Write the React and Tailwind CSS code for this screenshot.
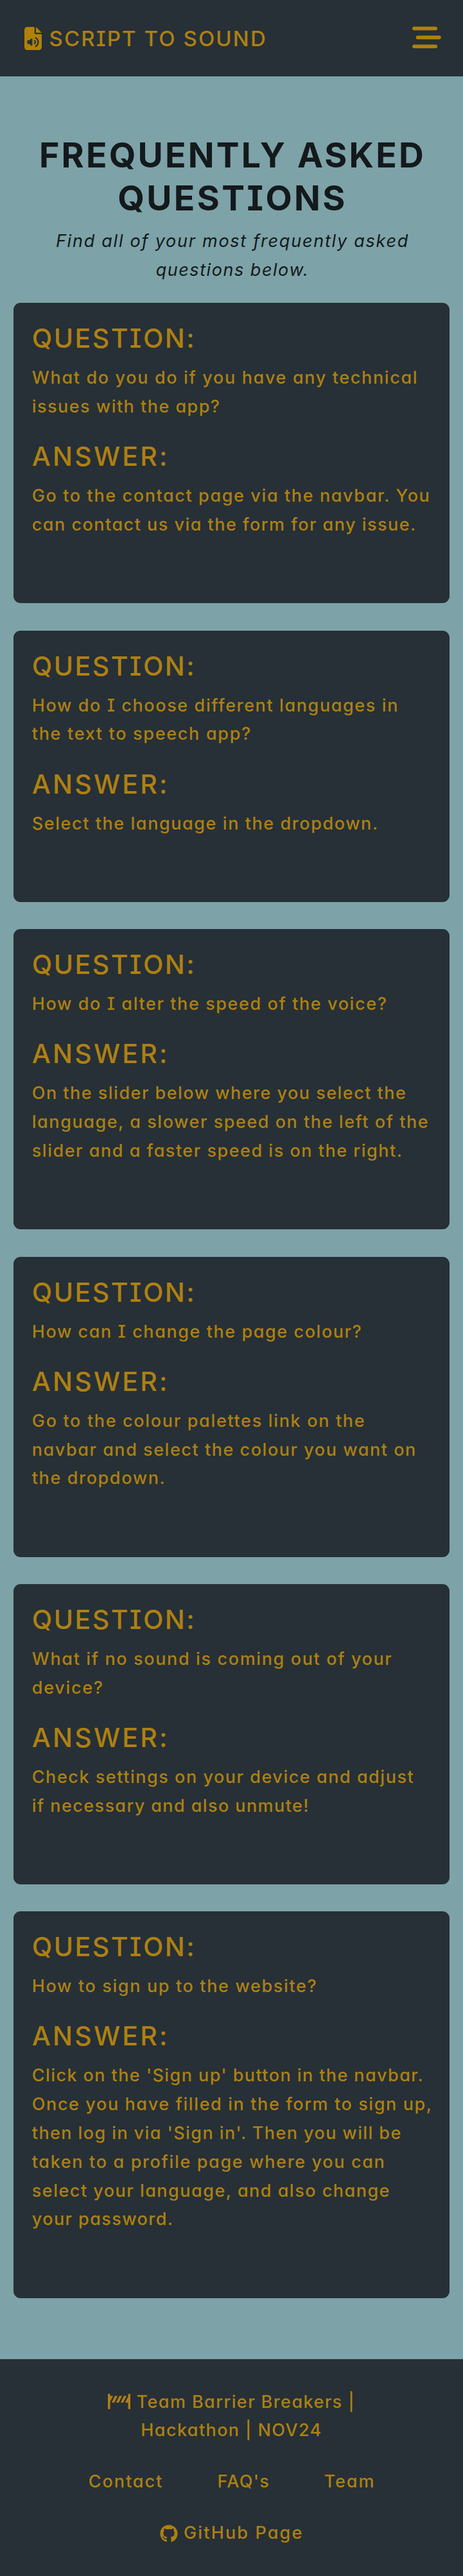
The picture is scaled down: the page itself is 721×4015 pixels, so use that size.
import { FaBarsStaggered, FaFileAudio, FaGithub, FaRoadBarrier } from "react-icons/fa6";

const FAQS = [
  {
    question: [
      ["What do you do if you have any technical", "tracking-[1.65px]"],
      ["issues with the app?", "tracking-[1.47px]"],
    ],
    answer: [
      ["Go to the contact page via the navbar. You", "tracking-[1.61px]"],
      ["can contact us via the form for any issue.", "tracking-[1.48px]"],
    ],
  },
  {
    question: [
      ["How do I choose different languages in", "tracking-[1.6px]"],
      ["the text to speech app?", "tracking-[1.69px]"],
    ],
    answer: [["Select the language in the dropdown.", "tracking-[1.57px]"]],
  },
  {
    question: [["How do I alter the speed of the voice?", "tracking-[1.6px]"]],
    answer: [
      ["On the slider below where you select the", "tracking-[1.48px]"],
      ["language, a slower speed on the left of the", "tracking-[1.54px]"],
      ["slider and a faster speed is on the right.", "tracking-[1.52px]"],
    ],
  },
  {
    question: [["How can I change the page colour?", "tracking-[1.57px]"]],
    answer: [
      ["Go to the colour palettes link on the", "tracking-[1.67px]"],
      ["navbar and select the colour you want on", "tracking-[1.54px]"],
      ["the dropdown.", "tracking-[1.62px]"],
    ],
  },
  {
    question: [
      ["What if no sound is coming out of your", "tracking-[1.63px]"],
      ["device?", "tracking-[1.7px]"],
    ],
    answer: [
      ["Check settings on your device and adjust", "tracking-[1.53px]"],
      ["if necessary and also unmute!", "tracking-[1.41px]"],
    ],
  },
  {
    question: [["How to sign up to the website?", "tracking-[1.64px]"]],
    answer: [
      ["Click on the 'Sign up' button in the navbar.", "tracking-[1.41px]"],
      ["Once you have filled in the form to sign up,", "tracking-[1.6px]"],
      ["then log in via 'Sign in'. Then you will be", "tracking-[1.4px]"],
      ["taken to a profile page where you can", "tracking-[1.65px]"],
      ["select your language, and also change", "tracking-[1.49px]"],
      ["your password.", "tracking-[1.42px]"],
    ],
  },
];

function Lines({ lines }) {
  return (
    <p className="text-[27px] leading-[44.8px] whitespace-nowrap">
      {lines.map(([text, tracking]) => (
        <span key={text} className={`block ${tracking}`}>
          {text}
        </span>
      ))}
    </p>
  );
}

function FaqCard({ question, answer }) {
  return (
    <article className="rounded-[11px] bg-[#263036] px-[28.6px] pt-[29.8px] pb-[99.6px] font-medium text-[#ae8012]">
      <h2 className="mb-[14px] text-[41px] leading-[51px] tracking-[2.45px]">QUESTION:</h2>
      <Lines lines={question} />
      <h2 className="mt-[29.4px] mb-[14px] text-[41px] leading-[51px] tracking-[3.2px]">ANSWER:</h2>
      <Lines lines={answer} />
    </article>
  );
}

export default function App() {
  return (
    <div className="flex h-[4015px] w-full flex-col overflow-hidden bg-[#7da3a8] font-['Inter',sans-serif] [font-feature-settings:'cv11','cv08']">
      <header className="flex h-[119px] shrink-0 items-start justify-between bg-[#263036] pt-[36px] pr-[34.5px] pl-[38px] text-[#ae8012]">
        <a className="flex items-start" href="#home">
          <FaFileAudio className="mt-[6px] h-[36px] w-[27px] text-[#b08108]" />
          <span className="ml-[11.5px] text-[33px] leading-[49px] font-medium tracking-[2.1px] whitespace-nowrap">SCRIPT TO SOUND</span>
        </a>
        <button aria-label="Menu" className="text-[#b08108]">
          <FaBarsStaggered className="size-[44.8px]" />
        </button>
      </header>

      <main className="shrink-0 px-[21.2px] pt-[88.9px]">
        <div className="pl-[3px] text-center whitespace-nowrap text-[#14191c]">
          <h1 className="text-[53.6px] leading-[67.2px] font-bold">
            <span className="block tracking-[3.2px]">FREQUENTLY ASKED</span>
            <span className="block tracking-[3.4px]">QUESTIONS</span>
          </h1>
          <p className="mt-[12.2px] text-[27px] leading-[44.8px] italic">
            <span className="block tracking-[1.75px]">Find all of your most frequently asked</span>
            <span className="block tracking-[1.55px]">questions below.</span>
          </p>
        </div>
        <section className="mt-[28.4px] flex flex-col gap-[42.4px]">
          {FAQS.map((faq) => (
            <FaqCard key={faq.question[0][0]} {...faq} />
          ))}
        </section>
      </main>

      <footer className="mt-auto flex h-[338px] shrink-0 flex-col items-center bg-[#263036] pt-[44.5px] text-[27px] leading-[44.8px] font-medium whitespace-nowrap text-[#ae8012]">
        <div className="flex flex-col items-center">
          <div className="flex">
            <FaRoadBarrier className="mt-[7.5px] h-[28px] w-[35px]" />
            <span className="ml-[9.5px] tracking-[1.42px]">Team Barrier Breakers |</span>
          </div>
          <span className="tracking-[1.4px]">Hackathon | NOV24</span>
        </div>
        <nav className="mt-[35.2px] flex gap-[84.5px] pl-px">
          <a href="#contact" className="tracking-[1.95px]">Contact</a>
          <a href="#faqs" className="tracking-[1.25px]">FAQ's</a>
          <a href="#team" className="tracking-[1.9px]">Team</a>
        </nav>
        <a href="#github" className="mt-[35.1px] flex pl-px">
          <FaGithub className="mt-[8.5px] h-[28px] w-[28px]" />
          <span className="ml-[8.5px] tracking-[2.15px]">GitHub Page</span>
        </a>
      </footer>
    </div>
  );
}
